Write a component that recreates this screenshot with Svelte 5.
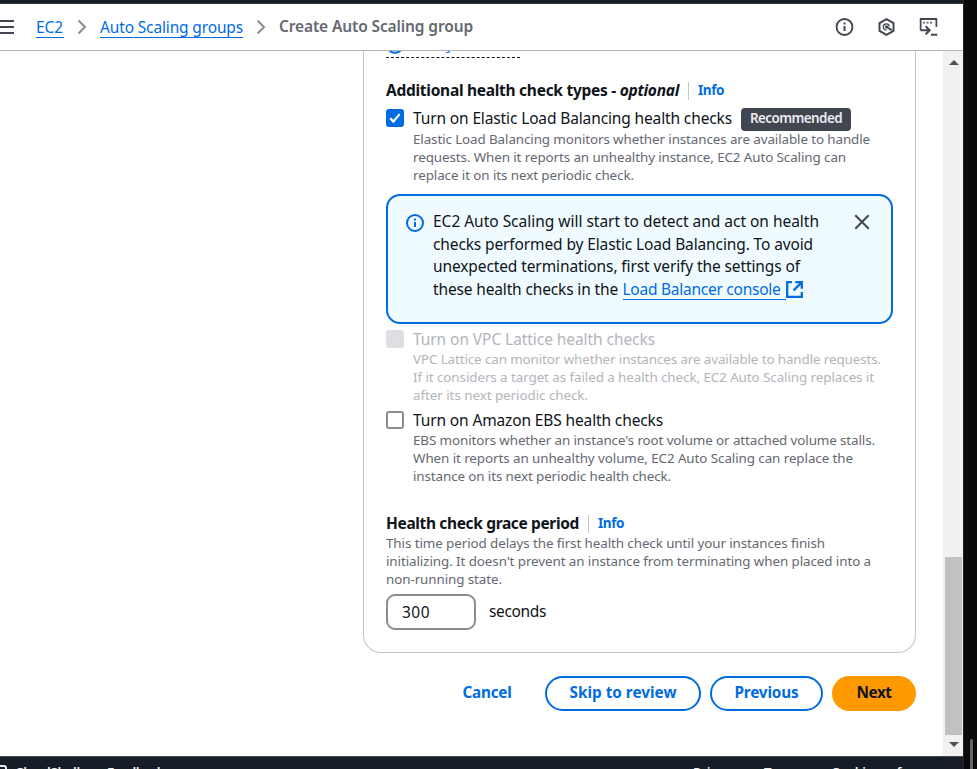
<script>
  const elb = [
    ['Elastic Load Balancing monitors whether instances are available to handle', 457],
    ['requests. When it reports an unhealthy instance, EC2 Auto Scaling can', 433],
    ['replace it on its next periodic check.', 221]
  ];
  const lattice = [
    ['VPC Lattice can monitor whether instances are available to handle requests.', 468],
    ['If it considers a target as failed a health check, EC2 Auto Scaling replaces it', 461],
    ['after its next periodic check.', 175]
  ];
  const ebs = [
    ["EBS monitors whether an instance's root volume or attached volume stalls.", 462],
    ['When it reports an unhealthy volume, EC2 Auto Scaling can replace the', 440],
    ['instance on its next periodic health check.', 258]
  ];
  const grace = [
    ['This time period delays the first health check until your instances finish', 439],
    ["initializing. It doesn't prevent an instance from terminating when placed into a", 485],
    ['non-running state.', 116]
  ];

  // Tracks a line of text so that it sets to the given width.
  function fit(node, width) {
    const n = node.textContent.length;
    const natural = node.getBoundingClientRect().width;
    node.style.letterSpacing = `${(width - natural) / n}px`;
  }
</script>

{#snippet lines(rows)}
  {#each rows as [text, width]}
    <div class="line"><span use:fit={width}>{text}</span></div>
  {/each}
{/snippet}

<div class="screen">
  <div class="window">
    <div class="topbar"></div>
    <header>
      <svg class="menu" width="14" height="16" viewBox="0 0 14 16"><path d="M0 2h14M0 8h14M0 14h14" /></svg>
      <nav>
        <a class="c1" href="#ec2"><span use:fit={27}>EC2</span></a>
        <svg class="chev" width="10" height="16" viewBox="0 0 10 16"><path d="M1.5 1.5 8 8l-6.5 6.5" /></svg>
        <a class="c2" href="#groups"><span use:fit={143}>Auto Scaling groups</span></a>
        <svg class="chev" width="10" height="16" viewBox="0 0 10 16"><path d="M1.5 1.5 8 8l-6.5 6.5" /></svg>
        <strong><span use:fit={194}>Create Auto Scaling group</span></strong>
      </nav>
      <div class="tools">
        <svg width="18" height="18" viewBox="0 0 18 18"><circle cx="9" cy="9" r="8" /><path d="M9 8v5M9 4.6v2" /></svg>
        <svg width="18" height="18" viewBox="0 0 18 18"><path d="M9 1.2 16 5v8l-7 3.8L2 13V5z" /><path class="thin" d="M11.8 8.6A3 3 0 1 0 9 11.8" /><path d="m9 9 5.2 3.2" /><circle cx="9" cy="8.8" r="1.6" class="solid" /></svg>
        <svg width="18" height="18" viewBox="0 0 18 18"><path d="M1 12.2V1h16v8M1 12.2h9M6.2 8.2l4 4-4 4M11.5 16.8H18" /><path class="dots" d="M3.4 4.6h2M7 4.6h2M10.6 4.6h2" /></svg>
      </div>
    </header>

    <div class="body">
      <main>
        <section class="card">
          <div class="peek">
            <svg width="18" height="18" viewBox="0 0 18 18"><circle cx="9" cy="9" r="7.8" /></svg>
            <span><span use:fit={107}>Always enabled</span></span>
          </div>

          <div class="heading first">
            <b><span use:fit={293}>Additional health check types - <i>optional</i></span></b>
            <a class="info" href="#info"><span use:fit={26}>Info</span></a>
          </div>

          <div class="option">
            <div class="box on"><svg width="18" height="18" viewBox="0 0 18 18"><path d="m4.2 9.3 3.2 3.2 6.2-7.4" /></svg></div>
            <div>
              <div class="title"><span use:fit={319}>Turn on Elastic Load Balancing health checks</span><em class="badge"><span use:fit={92}>Recommended</span></em></div>
              <div class="desc">{@render lines(elb)}</div>
            </div>
          </div>

          <div class="alert">
            <svg class="ai" width="18" height="18" viewBox="0 0 18 18"><circle cx="9" cy="9" r="8" /><path d="M9 8v5M9 4.6v2" /></svg>
            <div class="msg">
              <div><span use:fit={386}>EC2 Auto Scaling will start to detect and act on health</span></div>
              <div><span use:fit={380}>checks performed by Elastic Load Balancing. To avoid</span></div>
              <div><span use:fit={367}>unexpected terminations, first verify the settings of</span></div>
              <div class="last"><span use:fit={185}>these health checks in the</span><a href="#lb"><span use:fit={158}>Load Balancer console</span></a><svg width="17" height="17" viewBox="0 0 17 17"><path d="M6 1.2H1.2v14.6h14.6V11M9.2 1.2h6.6v6.6M15.6 1.4 7.6 9.4" /></svg></div>
            </div>
            <svg class="close" width="16" height="16" viewBox="0 0 16 16"><path d="m1.3 1.3 13.4 13.4M14.7 1.3 1.3 14.7" /></svg>
          </div>

          <div class="option off">
            <div class="box"></div>
            <div>
              <div class="title"><span use:fit={242}>Turn on VPC Lattice health checks</span></div>
              <div class="desc">{@render lines(lattice)}</div>
            </div>
          </div>

          <div class="option ebs">
            <div class="box"></div>
            <div>
              <div class="title"><span use:fit={250}>Turn on Amazon EBS health checks</span></div>
              <div class="desc">{@render lines(ebs)}</div>
            </div>
          </div>

          <div class="heading grace">
            <b><span use:fit={193}>Health check grace period</span></b>
            <a class="info" href="#info"><span use:fit={26}>Info</span></a>
          </div>
          <div class="desc hint">{@render lines(grace)}</div>
          <div class="field">
            <div class="input"><span use:fit={28}>300</span></div>
            <span class="unit"><span use:fit={57}>seconds</span></span>
          </div>
        </section>

        <div class="actions">
          <button class="cancel"><span use:fit={49}>Cancel</span></button>
          <button class="skip"><span use:fit={107}>Skip to review</span></button>
          <button class="prev"><span use:fit={64}>Previous</span></button>
          <button class="next"><span use:fit={35}>Next</span></button>
        </div>
      </main>
      <div class="scroll">
        <svg width="10" height="5" viewBox="0 0 10 5"><path d="M5 0 10 5H0z" /></svg>
        <div class="thumb"></div>
        <svg width="10" height="5" viewBox="0 0 10 5"><path d="M0 0h10L5 5z" /></svg>
      </div>
    </div>

    <footer>
      <svg width="8" height="12" viewBox="0 0 8 12"><path d="M0 3h4Q6 3 6 5v7" /></svg>
      <b class="shell"><span use:fit={65}>CloudShell</span></b>
      <b class="feed"><span use:fit={57}>Feedback</span></b>
      <b class="priv"><span use:fit={46}>Privacy</span></b>
      <b class="terms"><span use:fit={38}>Terms</span></b>
      <b class="cook"><span use:fit={118}>Cookie preferences</span></b>
    </footer>
  </div>
  <div class="edge"><div class="grip"></div></div>
</div>

<style>
  :global(body) { margin: 0; overflow: hidden; }
  * { box-sizing: border-box; }
  .screen { display: flex; width: 977px; height: 769px; overflow: hidden; background: #0a0a0a; font: 15.5px/22.67px "Noto Sans", sans-serif; color: #0f141a; white-space: nowrap; }
  .window { display: flex; flex-direction: column; width: 963px; height: 769px; overflow: hidden; background: #fff; }
  .topbar { flex: none; height: 4px; background: #161d26; border-bottom: 1px solid #333843; }
  svg { display: block; flex: none; fill: none; stroke: #424650; stroke-width: 2; }
  a { color: #006ce0; text-decoration: none; }
  header { flex: none; display: flex; align-items: center; height: 47px; border-bottom: 1px solid #b4b4bb; }
  .menu { margin-right: 22px; }
  nav { display: flex; align-items: center; }
  nav a { height: 22px; line-height: 22px; border-bottom: 1px solid #006ce0; }
  .c1 { width: 28px; }
  .c2 { width: 143px; }
  nav strong { height: 24px; font-weight: 650; color: #656871; }
  .chev { stroke: #8c8c94; margin: 0 13px; }
  .tools { display: flex; gap: 24px; margin-left: auto; margin-right: 25.5px; }
  .tools { transform: translateX(-0.5px); }
  .solid { fill: #424650; stroke: none; }
  .thin { stroke-width: 1.2; }
  .dots { stroke: #656871; stroke-width: 1.8; }
  .body { flex: none; display: flex; height: 705px; }
  main { flex: none; width: 943px; height: 705px; overflow: hidden; }
  .card { width: 553px; height: 602px; margin-left: 363px; padding: 0 22px; border: 1px solid #c6c6cd; border-top: 0; border-radius: 0 0 18px 18px; }
  .peek { display: flex; align-items: flex-end; gap: 9px; width: 134px; height: 7px; border-bottom: 1px dashed #0f141a; color: #006ce0; font-size: 15px; overflow: hidden; }
  .peek svg { stroke: #006ce0; margin-bottom: 3px; }
  .peek > span { margin-bottom: 2px; }
  .heading { display: flex; align-items: center; height: 23px; }
  .heading.first { margin-top: 21px; }
  .heading b { font-weight: 700; }
  .info { height: 18px; margin-left: 9px; padding-left: 9px; border-left: 1px solid #c6c6cd; font-size: 13.5px; font-weight: 700; line-height: 17px; }
  .option { display: flex; gap: 9px; }
  .title { display: flex; align-items: center; height: 24px; margin-top: 4px; line-height: 24px; }
  .box { flex: none; width: 18px; height: 18px; margin-top: 7px; border: 2px solid #8c8c94; border-radius: 3px; background: #fff; }
  .box.on { border: 0; background: #006ce0; }
  .box.on svg { stroke: #fff; stroke-width: 2.2; }
  .badge { height: 23px; margin: 2px 0 0 9px; padding: 0 9px; border-radius: 4px; background: #424650; color: #ebebf0; font: 600 13.4px/20px "Noto Sans", sans-serif; }
  .desc { color: #656871; font-size: 13.4px; line-height: 18px; }
  .line { height: 18px; }
  .alert { display: flex; width: 507px; height: 130px; margin-top: 10px; padding: 14px 18px 0; border: 2px solid #006ce0; border-radius: 14px; background: #f0fbff; }
  .ai { margin-top: 4px; stroke: #006ce0; }
  .msg { margin-left: 9px; width: 420px; }
  .last { display: flex; align-items: center; }
  .last a { width: 163px; height: 21px; margin-left: 4.5px; line-height: 21px; border-bottom: 1px solid #006ce0; }
  .last svg { margin-left: 0.5px; stroke: #006ce0; stroke-width: 2.3; }
  .close { margin: 4px 0 0 1px; }
  .off { margin-top: -1px; }
  .off .box { border: 0; background: #dedee3; }
  .off .title, .off .desc { color: #b4b4bb; }
  .off .title, .ebs .title { height: 23px; }
  .ebs { margin-top: 0; }
  .grace { margin-top: 27px; }
  .hint { margin-top: -1px; }
  .field { display: flex; align-items: center; gap: 13px; margin-top: 6px; height: 36px; }
  .input { display: flex; align-items: center; width: 90px; height: 36px; padding: 0 14px; border: 2px solid #8c8c94; border-radius: 9px; }
  .unit { height: 25px; }
  .actions { display: flex; width: 916px; justify-content: flex-end; margin-top: 23px; height: 35px; }
  button { height: 35px; padding: 0 0 3px; border: 2px solid #006ce0; border-radius: 18px; background: #fff; color: #006ce0; font: 700 15.3px/22px "Noto Sans", sans-serif; }
  .cancel { width: 96px; border: 0; margin-right: 10px; }
  .skip { width: 156px; margin-right: 9px; }
  .prev { width: 113px; margin-right: 9px; }
  .next { width: 84px; border: 0; background: #ff9900; color: #0f141a; }
  .scroll { display: flex; flex-direction: column; align-items: center; width: 20px; padding: 9px 0 9px 1px; background: #f1f1f1; }
  .scroll svg { fill: #505050; stroke: none; }
  .thumb { width: 17px; height: 178px; margin: auto 0 7px; background: #c1c1c1; }
  footer { flex: none; display: flex; height: 13px; padding-top: 6px; border-top: 1px solid #424650; background: #161d26; color: #ebebf0; font-size: 13.2px; line-height: 18px; overflow: hidden; }
  footer b { font-weight: 600; }
  footer svg { stroke: #ebebf0; }
  .shell { width: 92px; margin-left: 7px; }
  .feed { width: 586px; }
  .priv { width: 71px; }
  .terms { width: 67px; }
  .edge { width: 14px; border-left: 1px solid #222; padding: 739px 0 0 6px; }
  .grip { width: 3px; height: 40px; border-radius: 2px; background: #666; }
</style>
